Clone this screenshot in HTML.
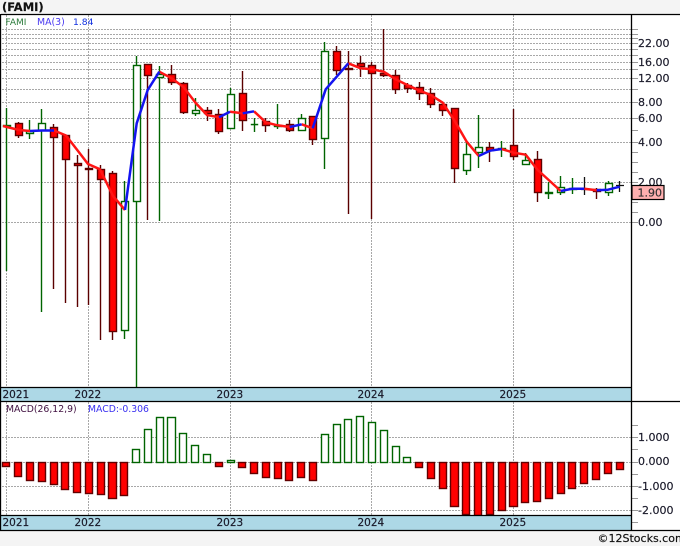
<!DOCTYPE html>
<html><head><meta charset="utf-8"><style>
html,body{margin:0;padding:0;background:#f4f4f4;width:680px;height:546px;overflow:hidden}
svg{display:block}
text{font-family:"DejaVu Sans",sans-serif;font-size:11px;fill:#1a1a2a;stroke:#1a1a2a;stroke-width:.18px}
.g{stroke:#a8a8a8;stroke-width:1;stroke-dasharray:2 1;fill:none}
.t{stroke:#999;stroke-width:1.1;fill:none}
.k{stroke:#000;stroke-width:1.3;fill:none}
.gr path{stroke:#006400;stroke-width:1.4;fill:none}
.gr rect{stroke:#006400;stroke-width:1.4;fill:#fff}
.rd path{stroke:#5a0000;stroke-width:1.4;fill:none}
.rd rect{stroke:#600000;stroke-width:1.4;fill:#f00}
</style></head><body>
<svg width="680" height="546" viewBox="0 0 680 546" xmlns="http://www.w3.org/2000/svg">
<rect x="0" y="14" width="680" height="516" fill="#fff"/>
<text x="2" y="11" style="font-size:11.5px;font-weight:bold;fill:#111;stroke:#111">(FAMI)</text>

<path class="g" d="M2 29.5H632M2 34.5H632M2 38.5H632M2 43.5H632M2 49.5H632M2 55.5H632M2 62.5H632M2 69.5H632M2 78.5H632M2 89.5H632M2 102.5H632M2 118.5H632M2 142.5H632M2 182.5H632M2 222.5H632M2 437.5H632M2 462.5H632M2 486.5H632M2 510.5H632"/>
<path class="g" d="M6.5 15V515M88.5 15V515M230.5 15V515M371.5 15V515M513.5 15V515"/>
<path class="t" d="M632 29.5h6M632 34.5h6M632 38.5h6M632 43.5h6M632 49.5h6M632 55.5h6M632 62.5h6M632 69.5h6M632 78.5h6M632 89.5h6M632 102.5h6M632 118.5h6M632 130.5h6M632 142.5h6M632 152.5h6M632 162.5h6M632 172.5h6M632 182.5h6M632 202.5h6M632 212.5h6M632 222.5h6M632 425.5h6M632 437.5h6M632 449.5h6M632 462.5h6M632 474.5h6M632 486.5h6M632 498.5h6M632 510.5h6M632 522.5h6"/>

<g class="gr">
<path d="M6.5 108V271M29.5 120V139M41.5 109V312M124.5 181V339M136.5 56V387M159.5 66V221M195.5 98V116M230.5 88V128M254.5 118V132M277.5 104V129M301.5 114V131M324.5 42V169M466.5 141V175M478.5 115V168M501.5 141V157M525.5 153V165M548.5 182V199M560.5 176V195M572.5 178V194M608.5 181V196"/>
<rect x="3.5" y="125.5" width="7" height="1" fill="#006400" style="fill:#006400"/>
<rect x="26.5" y="131.5" width="7" height="2"/>
<rect x="38.5" y="123.5" width="7" height="7"/>
<rect x="121.5" y="201.5" width="7" height="129"/>
<rect x="133.5" y="65.5" width="7" height="136"/>
<rect x="156.5" y="74.5" width="7" height="3"/>
<rect x="192.5" y="110.5" width="7" height="3"/>
<rect x="227.5" y="94.5" width="7" height="34"/>
<rect x="251.5" y="124.5" width="6" height="0.1"/>
<rect x="274.5" y="125.5" width="7" height="1" style="fill:#006400"/>
<rect x="298.5" y="118.5" width="7" height="12"/>
<rect x="321.5" y="51.5" width="7" height="87"/>
<rect x="463.5" y="154.5" width="7" height="16"/>
<rect x="475.5" y="147.5" width="7" height="5"/>
<rect x="498.5" y="148.5" width="7" height="1" style="fill:#006400"/>
<rect x="522.5" y="160.5" width="7" height="4"/>
<rect x="545.5" y="192.5" width="7" height="1" style="fill:#006400"/>
<rect x="557.5" y="187.5" width="7" height="5"/>
<rect x="569.5" y="188.5" width="7" height="1" style="fill:#006400"/>
<rect x="605.5" y="183.5" width="7" height="9"/>
</g>
<g class="rd">
<path d="M18.5 122V138M53.5 124V289M65.5 135V303M77.5 155V307M88.5 149V305M100.5 165V340M112.5 171V340M147.5 64V220M171.5 65V85M183.5 82V114M207.5 107V121M218.5 109V134M242.5 71V131M265.5 118V132M289.5 120V132M312.5 116V145M336.5 46V75M348.5 51V214M360.5 56V77M371.5 62V219M383.5 29V77M395.5 70V94M407.5 83V93M419.5 82V100M430.5 88V108M442.5 104V116M454.5 108V183M489.5 142V162M513.5 109V160M537.5 151V202M596.5 188V199"/>
<rect x="15.5" y="123.5" width="7" height="12"/>
<rect x="50.5" y="127.5" width="7" height="10"/>
<rect x="62.5" y="135.5" width="7" height="24"/>
<rect x="74.5" y="163.5" width="7" height="2"/>
<rect x="85.5" y="168.5" width="7" height="1"/>
<rect x="97.5" y="169.5" width="7" height="10"/>
<rect x="109.5" y="173.5" width="7" height="158"/>
<rect x="144.5" y="64.5" width="7" height="11"/>
<rect x="168.5" y="74.5" width="7" height="8"/>
<rect x="180.5" y="83.5" width="7" height="29"/>
<rect x="204.5" y="110.5" width="7" height="3"/>
<rect x="215.5" y="114.5" width="7" height="17"/>
<rect x="239.5" y="93.5" width="7" height="27"/>
<rect x="262.5" y="121.5" width="7" height="4"/>
<rect x="286.5" y="124.5" width="7" height="6"/>
<rect x="309.5" y="116.5" width="7" height="23"/>
<rect x="333.5" y="51.5" width="7" height="19"/>
<rect x="345.5" y="68.5" width="7" height="1"/>
<rect x="357.5" y="63.5" width="7" height="3"/>
<rect x="368.5" y="65.5" width="7" height="8"/>
<rect x="380.5" y="73.5" width="7" height="2"/>
<rect x="392.5" y="75.5" width="7" height="14"/>
<rect x="404.5" y="85.5" width="7" height="3"/>
<rect x="416.5" y="87.5" width="7" height="6"/>
<rect x="427.5" y="93.5" width="7" height="11"/>
<rect x="439.5" y="104.5" width="7" height="6"/>
<rect x="451.5" y="108.5" width="7" height="60"/>
<rect x="486.5" y="147.5" width="7" height="3"/>
<rect x="510.5" y="145.5" width="7" height="11"/>
<rect x="534.5" y="159.5" width="7" height="33"/>
<rect x="593.5" y="189.5" width="7" height="2"/>
</g>
<path d="M584.5 177V195M581 189.5h7M619.5 181V192M616 185.5h8" stroke="#111" stroke-width="1.3" fill="none"/>

<g fill="none" stroke="#ff1515" stroke-width="2.5" stroke-linejoin="round">
<path d="M3 126L19 130L30 131M54 130.5L66 135.5L78 151L88 164L100 169.3L113 196L125 210M159.3 71.7L171.7 78.3L183.7 87.3L195.7 103L207 115L219 117.3M230 111.7L242.7 113.3M254 111.3L265.7 122.3L277.3 125.3L289.7 127M301.7 124.3L312.7 128.3M348.3 63.3L360.7 68.3L372 69.3L383.7 71.7L395.7 79.3L407.7 85.3L419.7 90.7L430.7 95L442.7 102.7L454.7 121L466.7 141.7L478.7 156M501.7 149L513.7 152.7L525.7 154.7L537.7 170L548.7 180L560.7 191M584.3 188.7L596.7 190.3"/>
</g>
<g fill="none" stroke="#1414f0" stroke-width="2.5" stroke-linejoin="round">
<path d="M30 131L42 130.5L54 130.5M125 210L136.7 123.3L147.7 90L159.3 71.7M219 117.3L230 111.7M242.7 113.3L254 111.3M289.7 127L301.7 124.3M312.7 128.3L325.7 89.3L336.7 76.7L348.3 63.3M478.7 156L490 150.7L501.7 149M560.7 191L572.7 188.7L584.3 188.7M596.7 190.3L608 189.7L619.7 186.7"/>
</g>

<g class="rd">
<rect x="2.5" y="462.5" width="7" height="4"/>
<rect x="14.5" y="462.5" width="7" height="14"/>
<rect x="26.5" y="462.5" width="7" height="18"/>
<rect x="38.5" y="462.5" width="7" height="19"/>
<rect x="50.5" y="462.5" width="7" height="22"/>
<rect x="61.5" y="462.5" width="7" height="27"/>
<rect x="73.5" y="462.5" width="7" height="30"/>
<rect x="85.5" y="462.5" width="7" height="31"/>
<rect x="97.5" y="462.5" width="7" height="32"/>
<rect x="108.5" y="462.5" width="8" height="36"/>
<rect x="120.5" y="462.5" width="7" height="33"/>
<rect x="215.5" y="462.5" width="7" height="4"/>
<rect x="238.5" y="462.5" width="7" height="5"/>
<rect x="250.5" y="462.5" width="7" height="11"/>
<rect x="262.5" y="462.5" width="7" height="15"/>
<rect x="274.5" y="462.5" width="7" height="16"/>
<rect x="285.5" y="462.5" width="7" height="18"/>
<rect x="297.5" y="462.5" width="7" height="15"/>
<rect x="309.5" y="462.5" width="7" height="18"/>
<rect x="415.5" y="462.5" width="7" height="5"/>
<rect x="427.5" y="462.5" width="7" height="16"/>
<rect x="439.5" y="462.5" width="7" height="26"/>
<rect x="450.5" y="462.5" width="8" height="44"/>
<rect x="462.5" y="462.5" width="7" height="52"/>
<rect x="474.5" y="462.5" width="7" height="53"/>
<rect x="486.5" y="462.5" width="7" height="52"/>
<rect x="498.5" y="462.5" width="7" height="48"/>
<rect x="509.5" y="462.5" width="8" height="44"/>
<rect x="521.5" y="462.5" width="7" height="40"/>
<rect x="533.5" y="462.5" width="7" height="39"/>
<rect x="545.5" y="462.5" width="7" height="36"/>
<rect x="557.5" y="462.5" width="7" height="31"/>
<rect x="568.5" y="462.5" width="7" height="26"/>
<rect x="580.5" y="462.5" width="7" height="21"/>
<rect x="592.5" y="462.5" width="7" height="17"/>
<rect x="604.5" y="462.5" width="7" height="11"/>
<rect x="616.5" y="462.5" width="7" height="7"/>
</g>
<g class="gr">
<rect x="132.5" y="449.5" width="7" height="13"/>
<rect x="144.5" y="429.5" width="7" height="33"/>
<rect x="156.5" y="417.5" width="7" height="45"/>
<rect x="167.5" y="417.5" width="8" height="45"/>
<rect x="179.5" y="433.5" width="7" height="29"/>
<rect x="191.5" y="445.5" width="7" height="17"/>
<rect x="203.5" y="454.5" width="7" height="8"/>
<rect x="227.5" y="460.5" width="7" height="2"/>
<rect x="321.5" y="434.5" width="7" height="28"/>
<rect x="333.5" y="424.5" width="7" height="38"/>
<rect x="344.5" y="419.5" width="7" height="43"/>
<rect x="356.5" y="416.5" width="7" height="46"/>
<rect x="368.5" y="422.5" width="7" height="40"/>
<rect x="380.5" y="430.5" width="7" height="32"/>
<rect x="392.5" y="446.5" width="7" height="16"/>
<rect x="403.5" y="457.5" width="7" height="5"/>
</g>

<rect x="1" y="387.5" width="631" height="14" fill="#add8e6"/>
<rect x="1" y="515.5" width="631" height="15" fill="#add8e6"/>
<path class="k" d="M1 14.5H680M0.5 14V531M631.5 14V531M1 387.5H632M1 401.5H680M1 515.5H632M0 530.5H680"/>

<text x="5.5" y="25" style="font-size:9px;fill:#2a7a3a;stroke:none">FAMI</text>
<text x="37" y="25" style="font-size:9.4px;fill:#4a3af0;stroke:none">MA(3)</text>
<text x="73" y="25" style="font-size:9.2px;fill:#1030e0;stroke:none">1.84</text>
<text x="6" y="412" style="font-size:9.3px;fill:#401040;stroke:none">MACD(26,12,9)</text>
<text x="88" y="412" style="font-size:9.3px;fill:#3a30f0;stroke:none">MACD:-0.306</text>

<text x="638" y="47">22.00</text>
<text x="638" y="66">16.00</text>
<text x="638" y="82">12.00</text>
<text x="638" y="106">8.00</text>
<text x="638" y="122">6.00</text>
<text x="638" y="146">4.00</text>
<text x="638" y="186">2.00</text>
<text x="638" y="226">0.00</text>
<rect x="632" y="185.5" width="32" height="14" fill="#ffb0b0" stroke="#000" stroke-width="1.2"/>
<text x="637.5" y="196.5" style="fill:#333;stroke:#333">1.90</text>
<text x="638" y="441">1.000</text>
<text x="638" y="465">0.000</text>
<text x="638" y="490">-1.000</text>
<text x="638" y="514">-2.000</text>

<text x="2.5" y="398" style="font-size:10.5px">2021</text>
<text x="74.5" y="398" style="font-size:10.5px">2022</text>
<text x="216.5" y="398" style="font-size:10.5px">2023</text>
<text x="357.5" y="398" style="font-size:10.5px">2024</text>
<text x="499.5" y="398" style="font-size:10.5px">2025</text>
<text x="2.5" y="526" style="font-size:10.5px">2021</text>
<text x="74.5" y="526" style="font-size:10.5px">2022</text>
<text x="216.5" y="526" style="font-size:10.5px">2023</text>
<text x="357.5" y="526" style="font-size:10.5px">2024</text>
<text x="499.5" y="526" style="font-size:10.5px">2025</text>

<text x="597.5" y="542" style="font-size:11px;fill:#111;stroke:#111">©12Stocks.com</text>
</svg>
</body></html>
